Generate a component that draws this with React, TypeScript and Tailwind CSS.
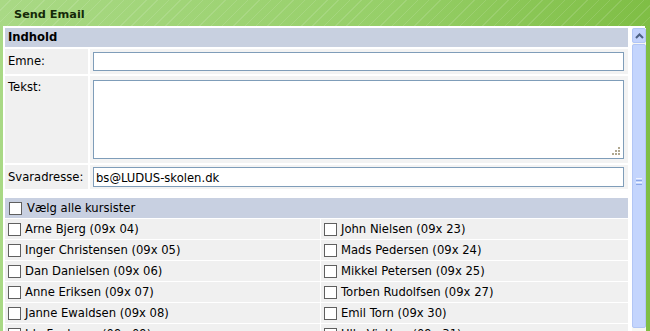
const students: [string, string][] = [
  ["Arne Bjerg (09x 04)", "John Nielsen (09x 23)"],
  ["Inger Christensen (09x 05)", "Mads Pedersen (09x 24)"],
  ["Dan Danielsen (09x 06)", "Mikkel Petersen (09x 25)"],
  ["Anne Eriksen (09x 07)", "Torben Rudolfsen (09x 27)"],
  ["Janne Ewaldsen (09x 08)", "Emil Torn (09x 30)"],
  ["Ida Fuglsang (09x 09)", "Ulla Vinther (09x 31)"],
];

const font = { fontFamily: '"DejaVu Sans", Verdana, sans-serif' };

function Box() {
  return <span className="inline-block w-[13px] h-[13px] shrink-0 border border-[#5f5f5f] bg-white" />;
}

function StudentCell({ name }: { name: string }) {
  return (
    <div className="h-[20px] bg-[#f0f0f0] flex items-center gap-[4px] pl-[3px]">
      <Box />
      <span className="pt-[2px]">{name}</span>
    </div>
  );
}

export default function App() {
  return (
    <div
      className="w-[650px] h-[331px] overflow-hidden flex flex-col bg-[linear-gradient(90deg,#a9d985,#96cf68_60%,#7fbe45)] text-[11.6px] text-black"
      style={font}
    >
      <div className="h-[26px] shrink-0 flex items-center pl-[14px] pt-[4px] bg-[repeating-linear-gradient(135deg,transparent_0px,transparent_7px,rgba(255,255,255,0.12)_7px,rgba(255,255,255,0.12)_8px)]">
        <span className="font-bold text-[11.3px] text-[#142a08]">Send Email</span>
      </div>
      <div className="flex-1 ml-[3px] mr-[5px] bg-white flex pt-[2px] pl-[2px] min-h-0">
        <div className="w-[623px] shrink-0 overflow-hidden">
          <div className="h-[19px] bg-[#c8d0e0] flex items-center pl-[3px] pt-[1px] font-bold">Indhold</div>
          <div className="mt-[2px] grid grid-cols-[83px_1fr] gap-[2px]">
            <div className="h-[25px] bg-[#f0f0f0] flex items-center pl-[3px] pt-[1px]">Emne:</div>
            <div className="h-[25px] bg-[#f3f3f3] pl-[3px] pr-[4px] pt-[3px]">
              <input className="w-full h-[19px] border border-[#7f9db9] bg-white outline-none px-[3px] block" readOnly />
            </div>
            <div className="h-[87px] bg-[#f0f0f0] pl-[3px] pt-[3px]">Tekst:</div>
            <div className="h-[87px] bg-[#f3f3f3] pl-[3px] pr-[4px] pt-[4px] relative">
              <textarea className="w-full h-[79px] border border-[#7f9db9] bg-white outline-none resize-none block" readOnly />
              <div className="absolute right-[8px] bottom-[8px] grid grid-cols-3 gap-[1px]">
                <span className="w-[2px] h-[2px]" />
                <span className="w-[2px] h-[2px]" />
                <span className="w-[2px] h-[2px] bg-[#b0a890]" />
                <span className="w-[2px] h-[2px]" />
                <span className="w-[2px] h-[2px] bg-[#b0a890]" />
                <span className="w-[2px] h-[2px] bg-[#b0a890]" />
                <span className="w-[2px] h-[2px] bg-[#b0a890]" />
                <span className="w-[2px] h-[2px] bg-[#b0a890]" />
                <span className="w-[2px] h-[2px] bg-[#b0a890]" />
              </div>
            </div>
            <div className="h-[24px] bg-[#f0f0f0] flex items-center pl-[3px] pt-[2px]">Svaradresse:</div>
            <div className="h-[24px] bg-[#f3f3f3] pl-[3px] pr-[4px] pt-[2px]">
              <input
                className="w-full h-[20px] border border-[#7f9db9] bg-white outline-none px-[2px] pt-[2px] text-[11.6px] text-black block"
                style={font}
                defaultValue="bs@LUDUS-skolen.dk"
                readOnly
              />
            </div>
          </div>
          <div className="mt-[9px] h-[20px] bg-[#c8d0e1] flex items-center gap-[5px] pl-[4px]">
            <Box />
            <span className="pt-[2px]">Vælg alle kursister</span>
          </div>
          <div className="mt-px grid grid-cols-[315px_1fr] gap-px">
            {students.map(([a, b]) => (
              <>
                <StudentCell key={a} name={a} />
                <StudentCell key={b} name={b} />
              </>
            ))}
          </div>
        </div>
        <div className="ml-[4px] w-[14px] shrink-0 flex flex-col bg-[#f7f7f2]">
          <div className="h-[15px] shrink-0 bg-[#c3d3fd] border border-[#b2c6f5] rounded-[2px] flex items-center justify-center">
            <svg width="9" height="6" viewBox="0 0 9 6">
              <path d="M1 5 L4.5 1.5 L8 5" stroke="#4d6185" strokeWidth="2" fill="none" />
            </svg>
          </div>
          <div className="mt-px h-[284px] shrink-0 bg-[#c4d5fd] border border-[#b2c6f5] rounded-[2px] flex items-center justify-center pb-[10px]">
            <div className="flex flex-col gap-[1px]">
              <span className="w-[6px] h-[1px] bg-[#eef3fe]" />
              <span className="w-[6px] h-[1px] bg-[#8aa6e8]" />
              <span className="w-[6px] h-[1px] bg-[#eef3fe]" />
              <span className="w-[6px] h-[1px] bg-[#8aa6e8]" />
            </div>
          </div>
        </div>
      </div>
    </div>
  );
}
